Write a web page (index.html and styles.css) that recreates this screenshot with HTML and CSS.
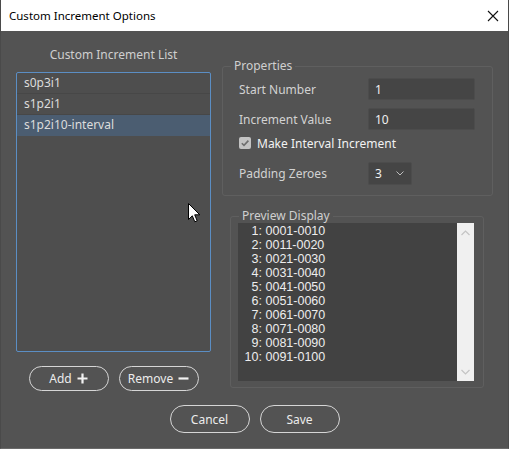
FILE: index.html
```html
<!DOCTYPE html>
<html lang="en">

<head>
    <meta charset="UTF-8">
    <title>Custom Increment Options</title>
    <link rel="stylesheet" href="styles.css">
</head>

<body>
    <div class="window">
        <div class="titlebar">
            <span class="title">Custom Increment Options</span>
            <svg class="close" width="12" height="12" viewBox="0 0 12 12">
                <path d="M1 1 L11 11 M11 1 L1 11" stroke="#111" stroke-width="1.1" fill="none" />
            </svg>
        </div>

        <div class="content">
            <div class="main">
                <div class="left">
                    <div class="list-title">Custom Increment List</div>
                    <ul class="list">
                        <li>s0p3i1</li>
                        <li>s1p2i1</li>
                        <li class="selected">s1p2i10-interval</li>
                    </ul>
                    <div class="list-buttons">
                        <button class="pill small">Add
                            <svg width="11" height="11" viewBox="0 0 11 11">
                                <path d="M5.5 0.5 V10.5 M0.5 5.5 H10.5" stroke="#f2f2f2" stroke-width="2.2" />
                            </svg>
                        </button>
                        <button class="pill small">Remove
                            <svg width="11" height="11" viewBox="0 0 11 11">
                                <path d="M0.5 5.5 H10.5" stroke="#f2f2f2" stroke-width="2.2" />
                            </svg>
                        </button>
                    </div>
                </div>

                <div class="right">
                    <fieldset class="group props">
                        <legend>Properties</legend>
                        <div class="row">
                            <label>Start Number</label>
                            <input type="text" class="field" value="1">
                        </div>
                        <div class="row">
                            <label>Increment Value</label>
                            <input type="text" class="field" value="10">
                        </div>
                        <div class="row check-row">
                            <span class="checkbox">
                                <svg width="10" height="10" viewBox="0 0 10 10">
                                    <path d="M1.8 5.2 L4 7.4 L8.4 2.6" stroke="#6e6e6e" stroke-width="1.6" fill="none" />
                                </svg>
                            </span>
                            <span class="check-label">Make Interval Increment</span>
                        </div>
                        <div class="row select-row">
                            <label>Padding Zeroes</label>
                            <div class="select">
                                <span>3</span>
                                <svg width="8" height="5" viewBox="0 0 8 5">
                                    <path d="M0.5 0.5 L4 4 L7.5 0.5" stroke="#bdbdbd" stroke-width="1" fill="none" />
                                </svg>
                            </div>
                        </div>
                    </fieldset>

                    <fieldset class="group preview">
                        <legend>Preview Display</legend>
                        <div class="textarea">
                            <div class="lines" id="lines"></div>
                            <div class="scrollbar">
                                <svg width="9" height="6" viewBox="0 0 9 6">
                                    <path d="M0.5 5 L4.5 1 L8.5 5" stroke="#c4c4c4" stroke-width="1.2" fill="none" />
                                </svg>
                                <svg width="9" height="6" viewBox="0 0 9 6">
                                    <path d="M0.5 1 L4.5 5 L8.5 1" stroke="#c4c4c4" stroke-width="1.2" fill="none" />
                                </svg>
                            </div>
                        </div>
                    </fieldset>
                </div>
            </div>

            <div class="footer">
                <button class="pill big">Cancel</button>
                <button class="pill big">Save</button>
            </div>
        </div>

        <svg class="cursor" width="13" height="20" viewBox="0 0 13 20">
            <path d="M0.5 0.5 L0.5 16.5 L4.3 12.8 L6.8 18.8 L9.2 17.8 L6.7 11.8 L11.8 11.8 Z" fill="#fff" stroke="#000" stroke-width="1" />
        </svg>
    </div>

    <script>
        const lines = document.getElementById('lines');
        const pad = n => String(n).padStart(4, '0');
        for (let i = 1; i <= 10; i++) {
            const start = (i - 1) * 10 + 1;
            const end = i * 10;
            const row = document.createElement('div');
            row.innerHTML = `<span class="n">${i}:</span> ${pad(start)}-${pad(end)}`;
            lines.appendChild(row);
        }
    </script>
</body>

</html>
```

FILE: styles.css
```css
* {
    box-sizing: border-box;
}

body {
    margin: 0;
    font-family: "Noto Sans", "Open Sans", sans-serif;
    font-size: 12px;
}

.window {
    position: relative;
    width: 509px;
    height: 449px;
    background-color: #535353;
    border: 1px solid #4a4a4a;
    border-top: none;
    border-bottom-color: #6a6a6a;
}

.titlebar {
    height: 31px;
    background-color: #fff;
    display: flex;
    align-items: center;
    justify-content: space-between;
    padding: 0 10px 0 8px;
    color: #000;
}

.title {
    font-size: 11.5px;
}

.close {
    margin-right: -1px;
}

.content {
    padding: 0 15px;
}

.main {
    display: flex;
    gap: 11px;
}

.left {
    width: 195px;
}

.list-title {
    margin-top: 16px;
    line-height: 16px;
    text-align: center;
    color: #cfcfcf;
}

.list {
    list-style: none;
    margin: 9px 0 0;
    padding: 0;
    height: 280px;
    border: 1px solid #5b8ec4;
    border-radius: 2px;
    background-color: #4e4e4e;
}

.list li {
    height: 21px;
    line-height: 20px;
    padding-left: 7px;
    color: #dcdcdc;
    border-bottom: 1px solid #474747;
}

.list li.selected {
    background-color: #4b5d71;
    border-bottom-color: #4b5d71;
}

.list-buttons {
    margin-top: 14px;
    display: flex;
    justify-content: center;
    gap: 10px;
}

.pill {
    font-family: inherit;
    font-size: 12px;
    color: #ececec;
    background: transparent;
    border: 1px solid #d6d6d6;
    border-radius: 14px;
    width: 80px;
    padding: 0;
    display: flex;
    align-items: center;
    justify-content: center;
    gap: 5px;
}

.pill.small {
    height: 25px;
}

.pill.big {
    height: 28px;
}

.right {
    width: 271px;
}

.group {
    border: 1px solid #5f5f5f;
    border-radius: 3px;
    margin: 0;
}

.group legend {
    line-height: 14px;
    padding: 0 3px;
    color: #cfcfcf;
}

.props {
    margin-top: 28px;
    padding: 5px 0 10px 16px;
}

.props legend {
    margin-left: -8px;
}

.row {
    display: flex;
    align-items: center;
}

.row label {
    width: 129px;
    color: #d2d2d2;
}

.row + .row {
    margin-top: 8px;
}

.field {
    width: 107px;
    height: 22px;
    background-color: #454545;
    border: 1px solid #4c4c4c;
    border-radius: 2px;
    color: #f0f0f0;
    font-family: inherit;
    font-size: 12px;
    padding: 0 6px;
}

.row.check-row {
    margin-top: 5px;
    height: 16px;
}

.checkbox {
    width: 12px;
    height: 12px;
    border-radius: 2px;
    background-color: #c3c3c3;
    display: flex;
    align-items: center;
    justify-content: center;
}

.check-label {
    margin-left: 6px;
    color: #f2f2f2;
}

.row.select-row {
    margin-top: 11px;
}

.select {
    width: 44px;
    height: 23px;
    background-color: #454545;
    border: 1px solid #4c4c4c;
    border-radius: 2px;
    display: flex;
    align-items: center;
    justify-content: space-between;
    padding: 0 7px 0 6px;
    color: #f0f0f0;
}

.preview {
    margin: 13px 9px 0 8px;
    padding: 0 9px 6px 7px;
}

.preview legend {
    margin-left: 1px;
}

.textarea {
    height: 158px;
    background-color: #424242;
    display: flex;
}

.lines {
    flex: 1;
    padding: 1px 0 0 4px;
    font-family: "Liberation Sans", Arial, sans-serif;
    font-size: 12.5px;
    line-height: 14px;
    color: #ededed;
}

.lines .n {
    display: inline-block;
    width: 20px;
    text-align: right;
}

.scrollbar {
    width: 17px;
    background-color: #f0f0f0;
    display: flex;
    flex-direction: column;
    justify-content: space-between;
    align-items: center;
    padding: 7px 0 6px;
}

.footer {
    margin-top: 14px;
    display: flex;
    justify-content: center;
    gap: 10px;
}

.cursor {
    position: absolute;
    left: 187px;
    top: 203px;
}
```
